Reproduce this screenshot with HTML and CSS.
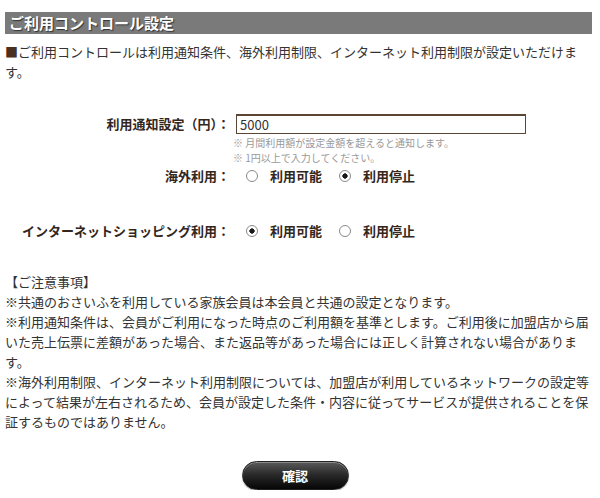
FILE: index.html
```html
<!DOCTYPE html>
<html lang="ja">
<head>
<meta charset="utf-8">
<title>ご利用コントロール設定</title>
<link rel="stylesheet" href="styles.css">
</head>
<body>
<div class="page">
  <h1 class="title">ご利用コントロール設定</h1>
  <p class="intro"><span class="sq">■</span>ご利用コントロールは利用通知条件、海外利用制限、インターネット利用制限が設定いただけま<span class="nw">す。</span></p>

  <form class="form">
    <div class="row row-amount">
      <div class="label">利用通知設定（円）：</div>
      <div class="field">
        <input class="text" type="text" value="5000">
      </div>
    </div>
    <div class="row row-notes">
      <div class="label"></div>
      <div class="field">
        <p class="hint">※ 月間利用額が設定金額を超えると通知します。</p>
        <p class="hint">※ 1円以上で入力してください。</p>
      </div>
    </div>
    <div class="row row-overseas">
      <div class="label">海外利用：</div>
      <div class="field radios">
        <label class="opt"><input type="radio" name="overseas"><span>利用可能</span></label>
        <label class="opt"><input type="radio" name="overseas" checked><span>利用停止</span></label>
      </div>
    </div>
    <div class="row row-net">
      <div class="label">インターネットショッピング利用：</div>
      <div class="field radios">
        <label class="opt"><input type="radio" name="net" checked><span>利用可能</span></label>
        <label class="opt"><input type="radio" name="net"><span>利用停止</span></label>
      </div>
    </div>
  </form>

  <div class="notice">
    <p>【ご注意事項】</p>
    <p>※共通のおさいふを利用している家族会員は本会員と共通の設定となります。</p>
    <p>※利用通知条件は、会員がご利用になった時点のご利用額を基準とします。ご利用後に加盟店から届いた売上伝票に差額があった場合、また返品等があった場合には正しく計算されない場合がありま<span class="nw">す。</span></p>
    <p>※海外利用制限、インターネット利用制限については、加盟店が利用しているネットワークの設定等によって結果が左右されるため、会員が設定した条件・内容に従ってサービスが提供されることを保証するものではありません。</p>
  </div>

  <div class="actions">
    <button class="btn" type="button">確認</button>
  </div>
</div>
</body>
</html>
```

FILE: styles.css
```css
html, body {
  margin: 0;
  padding: 0;
  background: #fff;
}

body {
  font-family: "Noto Sans CJK JP", "Noto Sans", sans-serif;
  font-size: 13px;
  color: #333;
}

.page {
  padding: 12px 0 0 5px;
  width: 587px;
}

.title {
  margin: 0;
  height: 22px;
  line-height: 22px;
  padding-left: 4px;
  background: #7a7a7a;
  color: #fff;
  font-size: 15px;
  font-weight: bold;
  text-shadow: 1px 1px 1px #333;
}

.intro {
  margin: 8px 0 0;
  width: 587px;
  line-height: 20px;
}

.sq {
  display: inline-block;
  width: 13px;
  text-align: center;
  color: #4a3023;
}

.nw {
  white-space: nowrap;
}

.form {
  margin-top: 32px;
  width: 580px;
}

.row {
  display: grid;
  grid-template-columns: 225px 1fr;
  column-gap: 6px;
  align-items: center;
}

.label {
  text-align: right;
  font-weight: bold;
  color: #33261d;
  line-height: 20px;
}

.text {
  box-sizing: border-box;
  width: 290px;
  height: 20px;
  margin: 0;
  padding: 0 3px;
  border: 1px solid #5b4535;
  border-top-width: 2px;
  font-family: inherit;
  font-size: 13px;
  color: #333;
  outline: none;
}

.row-notes .field {
  margin-left: -3px;
  padding-top: 1px;
}

.hint {
  margin: 0;
  font-size: 10px;
  line-height: 15px;
  color: #999;
}

.row-overseas {
  margin-top: 1px;
}

.row-net {
  margin-top: 35px;
}

.radios {
  display: flex;
  align-items: center;
  gap: 17px;
  padding-left: 10px;
  height: 20px;
}

.opt {
  display: inline-flex;
  align-items: center;
  gap: 12px;
  font-weight: bold;
  color: #33261d;
  line-height: 20px;
}

.opt input {
  -webkit-appearance: none;
  appearance: none;
  margin: 0;
  width: 12px;
  height: 12px;
  border: 1px solid #8a8a8a;
  border-radius: 50%;
  background: #fff;
  box-sizing: border-box;
}

.opt input:checked {
  background: radial-gradient(circle, #1a1a1a 0 2.4px, #fff 2.9px);
}

.notice {
  margin-top: 31px;
  width: 587px;
}

.notice p {
  margin: 0;
  line-height: 20px;
}

.actions {
  width: 580px;
  display: flex;
  justify-content: center;
  margin-top: 29px;
}

.btn {
  width: 107px;
  height: 29px;
  border-radius: 15px;
  border: 1px solid #222;
  background: linear-gradient(#5a5a5a 0%, #2b2b2b 45%, #050505 100%);
  box-shadow: inset 0 1px 0 #8a8a8a, 0 1px 1px #bbb;
  color: #fff;
  font-family: inherit;
  font-size: 13px;
  font-weight: bold;
  padding: 0;
  cursor: pointer;
}
```
